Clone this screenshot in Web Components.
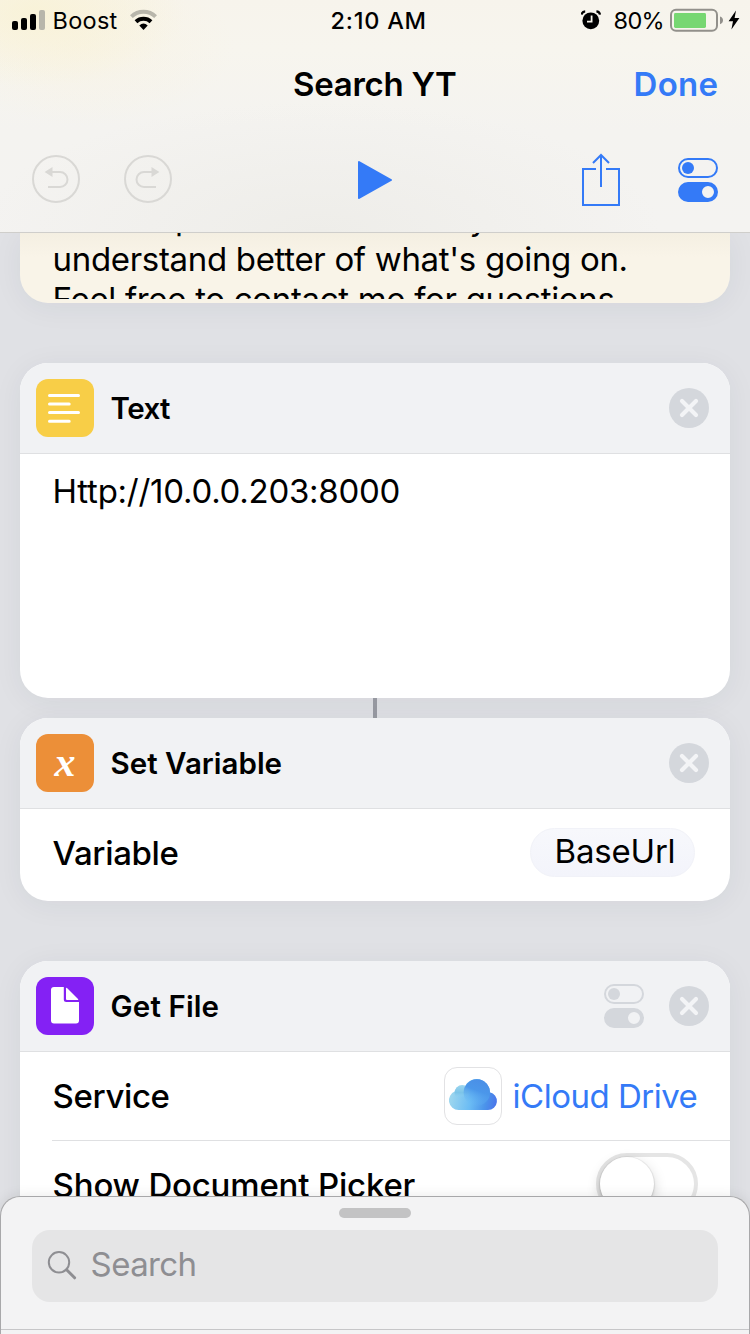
<!DOCTYPE html>
<html lang="en">
<head>
<meta charset="utf-8">
<title>Search YT</title>
<style>
  html, body { margin: 0; padding: 0; }
  body { width: 750px; height: 1334px; overflow: hidden; font-family: Inter, "Liberation Sans", sans-serif; color: #000; }
</style>
</head>
<body>
<shortcut-app></shortcut-app>

<script>
const define = (name, html, setup) => {
  const template = document.createElement('template');
  template.innerHTML = html;
  customElements.define(name, class extends HTMLElement {
    constructor() {
      super();
      this.attachShadow({ mode: 'open' }).append(template.content.cloneNode(true));
    }
    connectedCallback() { if (setup) setup(this, this.shadowRoot); }
  });
};

/* A single line of text whose visible glyphs span exactly "w" pixels. */
const ctx = document.createElement('canvas').getContext('2d');
define('ui-label', `
  <style>
    :host { display: block; flex: none; height: 40px; line-height: 40px; white-space: nowrap; }
    span { display: block; }
  </style>
  <span><slot></slot></span>`, (el, root) => {
  const size = +el.getAttribute('size') || 33;
  const weight = el.getAttribute('weight') || 400;
  const w = +el.getAttribute('w');
  const text = el.textContent;
  ctx.font = `${weight} ${size}px Inter, "Liberation Sans", sans-serif`;
  const m = ctx.measureText(text);
  const ink = m.actualBoundingBoxLeft + m.actualBoundingBoxRight;
  el.style.width = w + 'px';
  const s = root.querySelector('span').style;
  s.font = `${weight} ${size}px/40px Inter, "Liberation Sans", sans-serif`;
  s.letterSpacing = (w - 1 - ink) / (text.length - 1) + 'px';
  s.marginLeft = m.actualBoundingBoxLeft + .6 + 'px';
});

define('status-bar', `
  <style>
    :host { display: flex; align-items: center; justify-content: space-between; height: 40px; padding: 0 10px 0 12px; position: relative; }
    div { display: flex; align-items: center; }
    svg { display: block; flex: none; }
    .time { position: absolute; left: 331px; top: 1px; }
    ui-label { position: relative; top: 1px; }
    .time ui-label { top: 0; }
  </style>
  <div>
    <svg width="34" height="22" viewBox="0 0 34 22">
      <rect x="0" y="12" width="6" height="9" rx="2"/>
      <rect x="9" y="9" width="6" height="12" rx="2"/>
      <rect x="18" y="5" width="6" height="16" rx="2"/>
      <rect x="27" y="1" width="6" height="20" rx="2" fill="#b8b6ab"/>
    </svg>
    <ui-label size="23.5" w="64" style="margin-left:8px">Boost</ui-label>
    <svg width="30" height="22" viewBox="0 0 30 22" style="margin-left:11px">
      <path d="M2.4 7.6 A17.5 17.5 0 0 1 26.6 7.6" fill="none" stroke="#b8b6ab" stroke-width="4"/>
      <path d="M7 12.7 A11 11 0 0 1 22 12.7" fill="none" stroke="#000" stroke-width="4"/>
      <path d="M10.3 16.4 Q14.5 12.8 18.7 16.4 L14.5 21 Z"/>
    </svg>
  </div>
  <div class="time"><ui-label size="23.5" weight="500" w="94">2:10 AM</ui-label></div>
  <div>
    <svg width="20" height="20" viewBox="0 0 20 20">
      <circle cx="9.8" cy="10.8" r="8.4"/>
      <path d="M.6 4.6 Q1 1.6 4.2 1.4 M19 4.6 Q18.6 1.6 15.4 1.4" fill="none" stroke="#000" stroke-width="2.2"/>
      <path d="M10.6 5.4 V11.6 H6" fill="none" stroke="#f7f4ec" stroke-width="1.8"/>
    </svg>
    <ui-label size="23.5" w="49" style="margin-left:13px">80%</ui-label>
    <svg width="54" height="24" viewBox="0 0 54 24" style="margin-left:7px">
      <rect x="1" y="1.8" width="46" height="21" rx="5" fill="none" stroke="#92908b" stroke-width="2"/>
      <rect x="4" y="5" width="32" height="15" rx="1.4" fill="#77d772"/>
      <path d="M50 8.4 Q53 9.4 53 12.3 Q53 15.2 50 16.2 Z" fill="#92908b"/>
    </svg>
    <svg width="12" height="20" viewBox="0 0 12 20" style="margin-left:4px">
      <path d="M8 0.6 L0.6 11.2 H5 L3.4 19.4 L11.4 8 H6.6 Z"/>
    </svg>
  </div>`);

define('toggle-icon', `
  <style>:host { display: block; flex: none; width: 40px; height: 44px; } svg { display: block; }</style>
  <svg width="40" height="44" viewBox="0 0 40 44">
    <rect x="1" y="1" width="38" height="18" rx="9" fill="none" stroke="currentColor" stroke-width="2"/>
    <circle cx="10" cy="10" r="6" fill="currentColor"/>
    <path fill="currentColor" fill-rule="evenodd" d="M10 24 H30 A10 10 0 0 1 30 44 H10 A10 10 0 0 1 10 24 Z M30 28 A6 6 0 1 0 30 40 A6 6 0 1 0 30 28 Z"/>
  </svg>`);

define('app-header', `
  <style>
    :host {
      display: block; box-sizing: border-box; height: 233px; border-bottom: 1px solid #cfcecb; position: relative; z-index: 2;
      background:
        radial-gradient(ellipse 150px 75px at 35px 12px, rgba(249,242,212,.8), rgba(249,242,212,0)),
        radial-gradient(ellipse 150px 80px at 85px 45px, rgba(249,242,222,.5), rgba(249,242,222,0)),
        radial-gradient(ellipse 340px 130px at 320px 232px, #eeede9, rgba(238,237,233,0)),
        linear-gradient(#f7f4ec 0, #f7f5ee 50px, #f4f3f0 130px, #f4f3f1 232px);
    }
    .title { display: grid; grid-template-columns: 1fr auto 1fr; align-items: center; height: 88px; padding: 0 32px; }
    .title ui-label:last-child { justify-self: end; }
    .done { color: #347af7; }
    .tools { display: grid; grid-template-columns: 1fr 36px 1fr; align-items: center; height: 104px; padding: 0 32px; color: #347af7; }
    .group { display: flex; align-items: center; }
    .left { gap: 44px; padding-bottom: 2px; }
    .right { justify-content: flex-end; gap: 57px; }
    svg { display: block; }
  </style>
  <status-bar></status-bar>
  <div class="title"><i></i><ui-label weight="600" w="163">Search YT</ui-label><ui-label class="done" weight="600" w="83">Done</ui-label></div>
  <div class="tools">
    <div class="group left">
      <svg width="48" height="48" viewBox="0 0 48 48" fill="none" stroke="#d9d8d5" stroke-width="2">
        <circle cx="24" cy="24" r="23"/><path d="M20 17 H28 A7.5 7.5 0 0 1 28 32 H16"/><path d="M12.6 17 L20.5 12 V22 Z" fill="#d9d8d5" stroke="none"/>
      </svg>
      <svg width="48" height="48" viewBox="0 0 48 48" fill="none" stroke="#d9d8d5" stroke-width="2">
        <circle cx="24" cy="24" r="23"/><path d="M28 17 H20 A7.5 7.5 0 0 0 20 32 H32"/><path d="M35.4 17 L27.5 12 V22 Z" fill="#d9d8d5" stroke="none"/>
      </svg>
    </div>
    <svg width="36" height="40" viewBox="0 0 36 40"><path d="M2 2 L34 20 L2 38 Z" fill="#347af7" stroke="#347af7" stroke-width="2" stroke-linejoin="round"/></svg>
    <div class="group right">
      <svg width="40" height="56" viewBox="0 0 40 56" fill="none" stroke="#347af7" stroke-width="2">
        <path d="M15 17 H2 V53 H38 V17 H25 M20 3 V35 M12 11 L20 3 L28 11"/>
      </svg>
      <toggle-icon></toggle-icon>
    </div>
  </div>`);

define('note-card', `
  <style>
    :host { display: block; height: 70px; border-radius: 0 0 28px 28px; background: linear-gradient(#f4efe2, #f9f4e8 24px); box-shadow: 0 4px 30px rgba(40,45,60,.06); }
    .view { height: 66px; overflow: hidden; padding-left: 34px; }
    .view ui-label:first-child { margin: -35px 0 1px -4px; }
  </style>
  <div class="view">
    <ui-label w="438">each step in the chain so they</ui-label>
    <ui-label w="572">understand better of what's going on.</ui-label>
    <ui-label w="568">Feel free to contact me for questions.</ui-label>
  </div>`);

define('close-button', `
  <style>:host { display: block; flex: none; } svg { display: block; }</style>
  <svg width="40" height="40" viewBox="0 0 40 40"><circle cx="20" cy="20" r="20" fill="#d4d7dc"/><path d="M13 13 L27 27 M27 13 L13 27" stroke="#f3f4f6" stroke-width="4.2" stroke-linecap="round"/></svg>`);

define('action-card', `
  <style>
    :host { display: block; border-radius: 28px; background: #fff; box-shadow: 0 4px 30px rgba(40,45,60,.06); }
    header { display: flex; align-items: center; box-sizing: border-box; height: 91px; padding: 0 21px 0 16px; border-bottom: 1px solid #dfe0e2; border-radius: 28px 28px 0 0; background: #f1f2f4; }
    .icon { width: 58px; height: 58px; margin-right: 17px; border-radius: 12px; overflow: hidden; background: var(--tint); }
    .tools { display: flex; align-items: center; gap: 25px; margin-left: auto; color: #d4d7dc; }
  </style>
  <header>
    <div class="icon"><slot name="icon"></slot></div>
    <slot name="title"></slot>
    <div class="tools"><slot name="tools"></slot><close-button></close-button></div>
  </header>
  <slot></slot>`);

define('card-row', `
  <style>
    :host { display: flex; align-items: center; justify-content: space-between; box-sizing: border-box; height: 88px; padding: 0 34px 0 33px; }
  </style>
  <slot></slot>`);

define('variable-pill', `
  <style>
    :host { display: flex; align-items: center; box-sizing: border-box; width: 165px; height: 49px; padding: 0 20px 0 25px; border: 1px solid #f1f2f8; border-radius: 25px; background: linear-gradient(#f7f8fc, #f3f4fb); }
  </style>
  <slot></slot>`);

define('icloud-value', `
  <style>
    :host { display: flex; align-items: center; gap: 11px; margin-right: -1px; color: #347af7; }
    .box { box-sizing: border-box; width: 58px; height: 58px; border: 1px solid #e2e2e4; border-radius: 13px; }
    svg { display: block; margin: -1px; }
  </style>
  <div class="box">
    <svg width="58" height="58" viewBox="0 0 58 58">
      <defs>
        <linearGradient id="c" gradientUnits="userSpaceOnUse" x1="5" y1="30" x2="53" y2="40"><stop offset="0" stop-color="#a0d8ee"/><stop offset=".45" stop-color="#6bbcf4"/><stop offset=".75" stop-color="#4b94ea"/><stop offset="1" stop-color="#4a72ea"/></linearGradient>
        <linearGradient id="d" gradientUnits="userSpaceOnUse" x1="38" y1="12" x2="28" y2="38"><stop offset="0" stop-color="#4a8ee6"/><stop offset=".45" stop-color="#4b97ea"/><stop offset="1" stop-color="#66b8f5" stop-opacity="0"/></linearGradient>
        <linearGradient id="e" x1="0" y1="0" x2="0" y2="1"><stop offset="0" stop-color="#9bd6ef"/><stop offset=".5" stop-color="#7cc4e8"/><stop offset=".8" stop-color="#8bcff0" stop-opacity="0"/></linearGradient>
      </defs>
      <path d="M14.5 43 A9.7 9.7 0 0 1 11 24.3 A7.6 7.6 0 0 1 21 19.5 A13 13 0 0 1 45.8 25.2 A9 9 0 0 1 44 43 Z" fill="url(#c)"/>
      <circle cx="18.2" cy="25.7" r="7.6" fill="url(#e)"/>
      <circle cx="32.8" cy="25.5" r="13.2" fill="url(#d)"/>
    </svg>
  </div>
  <ui-label w="184">iCloud Drive</ui-label>`);

define('toggle-switch', `
  <style>
    :host { display: block; box-sizing: border-box; width: 102px; height: 62px; border: 4px solid #e5e5e5; border-radius: 31px; background: #fff; }
    i { display: block; width: 54px; height: 54px; border-radius: 50%; background: #fff; box-shadow: 0 0 0 1px rgba(0,0,0,.05), 0 5px 14px rgba(0,0,0,.18), 0 2px 3px rgba(0,0,0,.1); }
  </style>
  <i></i>`);

define('search-sheet', `
  <style>
    :host { display: flex; flex-direction: column; align-items: center; box-sizing: border-box; position: absolute; left: 0; right: 0; bottom: 0; height: 138px; border: 1px solid #a8a8aa; border-bottom: 0; border-radius: 20px 20px 0 0; background: #f3f3f4; box-shadow: 0 0 14px rgba(0,0,0,.09); z-index: 3; }
    .handle { width: 72px; height: 10px; margin-top: 11px; border-radius: 5px; background: #c3c3c4; }
    .field { display: flex; align-items: center; box-sizing: border-box; width: 686px; height: 72px; margin-top: 12px; padding-left: 15px; border-radius: 18px; background: #e5e5e6; color: #8e8e92; }
    .field ui-label { margin: 0 0 4px 14px; }
    .rule { width: 748px; height: 1px; margin-top: 27px; background: #c6c6c8; }
  </style>
  <div class="handle"></div>
  <div class="field">
    <svg width="30" height="30" viewBox="0 0 30 30" fill="none" stroke="#8e8e92"><circle cx="12" cy="11.3" r="10.2" stroke-width="2"/><path d="M19.6 18.8 L27.6 26.8" stroke-width="3" stroke-linecap="round"/></svg>
    <ui-label w="104">Search</ui-label>
  </div>
  <div class="rule"></div>`);

define('shortcut-app', `
  <style>
    :host { display: flex; flex-direction: column; position: relative; width: 750px; height: 1334px; overflow: hidden; background: #e0e1e5; }
    main { display: flex; flex-direction: column; flex: 1; min-height: 0; padding: 0 20px; }
    main > * { flex: none; }
    action-card { margin-top: 60px; }
    .text { height: 244px; box-sizing: border-box; padding: 17px 34px 0; }
    .link { align-self: center; width: 4px; height: 20px; background: #9799a1; }
    .link + action-card { margin-top: 0; }
    .var { height: 92px; padding-right: 35px; }
    .var ui-label, .var variable-pill { position: relative; top: -3px; }
    .var > ui-label { top: -2px; left: -1px; }
    .var variable-pill ui-label { top: -1px; }
    .rule { height: 1px; margin-left: 32px; background: #dfe0e2; }
    svg { display: block; }
    .x { display: block; width: 58px; text-align: center; color: #fff; font: italic bold 42px/56px "Liberation Serif", serif; }
    .switch { padding-right: 32px; }
    toggle-switch { margin-top: -2px; }
  </style>
  <app-header></app-header>
  <main>
    <note-card></note-card>
    <action-card style="--tint:#f8ce47">
      <svg slot="icon" width="58" height="58" viewBox="0 0 58 58" stroke="#fff" stroke-width="3" stroke-linecap="round"><path d="M13.5 16.5 H42.5 M13.5 25 H33.2 M13.5 33.5 H42.5 M13.5 42.3 H33.2"/></svg>
      <ui-label slot="title" size="29.5" weight="600" w="59.5">Text</ui-label>
      <div class="text"><ui-label w="345">Http://10.0.0.203:8000</ui-label></div>
    </action-card>
    <div class="link"></div>
    <action-card style="--tint:#ec8f38">
      <span slot="icon" class="x">x</span>
      <ui-label slot="title" size="29.5" weight="600" w="171">Set Variable</ui-label>
      <card-row class="var">
        <ui-label weight="500" w="126">Variable</ui-label>
        <variable-pill><ui-label w="118">BaseUrl</ui-label></variable-pill>
      </card-row>
    </action-card>
    <action-card style="--tint:#8421f4">
      <svg slot="icon" width="58" height="58" viewBox="0 0 58 58" fill="#fff"><path d="M18 10 H27.8 V22.5 Q27.8 25 30.3 25 H43 V43.5 Q43 46.5 40 46.5 H18 Q15 46.5 15 43.5 V13 Q15 10 18 10 Z"/><path d="M30 11.5 Q30 10.2 31 11 L42 22 Q43 23 41.6 23 H31 Q30 23 30 22 Z"/></svg>
      <ui-label slot="title" size="29.5" weight="600" w="108">Get File</ui-label>
      <toggle-icon slot="tools"></toggle-icon>
      <card-row><ui-label weight="500" w="116">Service</ui-label><icloud-value></icloud-value></card-row>
      <div class="rule"></div>
      <card-row class="switch"><ui-label weight="500" w="363">Show Document Picker</ui-label><toggle-switch></toggle-switch></card-row>
    </action-card>
  </main>
  <search-sheet></search-sheet>`);
</script>
</body>
</html>
